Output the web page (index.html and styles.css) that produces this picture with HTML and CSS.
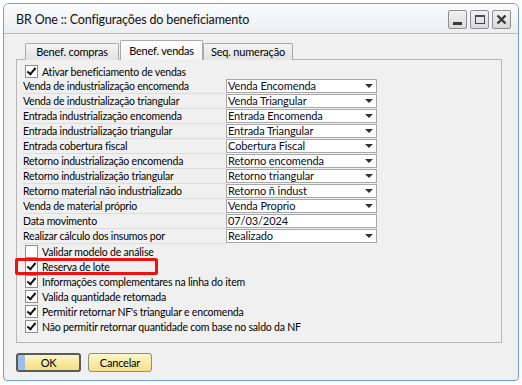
FILE: index.html
```html
<!DOCTYPE html>
<html>
<head>
<meta charset="utf-8">
<link rel="stylesheet" href="styles.css">
</head>
<body>
<div class="window">
  <div class="titlebar">
    <span class="title">BR One :: Configurações do beneficiamento</span>
    <div class="wbtns">
      <div class="wbtn"><svg width="17" height="17" viewBox="0 0 17 17"><rect x="4" y="11" width="9" height="3" fill="#3a3a3a"/></svg></div>
      <div class="wbtn"><svg width="17" height="17" viewBox="0 0 17 17"><rect x="4.5" y="4.5" width="9" height="8" fill="none" stroke="#4a4a4a" stroke-width="1"/><rect x="4" y="4" width="10" height="2" fill="#4a4a4a"/></svg></div>
      <div class="wbtn"><svg width="17" height="17" viewBox="0 0 17 17"><path d="M4.5 4.5 L12.5 12.5 M12.5 4.5 L4.5 12.5" stroke="#3a3a3a" stroke-width="2.4"/></svg></div>
    </div>
  </div>
  <div class="content">
    <div class="tabs">
      <div class="tab t1">Benef. compras</div>
      <div class="tab active">Benef. vendas</div>
      <div class="tab t3">Seq. numeração</div>
    </div>
    <div class="panel">
      <div class="chkrow first"><span class="chk on"></span><span>Ativar beneficiamento de vendas</span></div>
      <div class="row"><span class="lbl">Venda de industrialização encomenda</span><span class="sel">Venda Encomenda</span></div>
      <div class="row"><span class="lbl">Venda de industrialização triangular</span><span class="sel">Venda Triangular</span></div>
      <div class="row"><span class="lbl">Entrada industrialização encomenda</span><span class="sel">Entrada Encomenda</span></div>
      <div class="row"><span class="lbl">Entrada industrialização triangular</span><span class="sel">Entrada Triangular</span></div>
      <div class="row"><span class="lbl">Entrada cobertura fiscal</span><span class="sel">Cobertura Fiscal</span></div>
      <div class="row"><span class="lbl">Retorno industrialização encomenda</span><span class="sel">Retorno encomenda</span></div>
      <div class="row"><span class="lbl">Retorno industrialização triangular</span><span class="sel">Retorno triangular</span></div>
      <div class="row"><span class="lbl">Retorno material não industrializado</span><span class="sel">Retorno ñ indust</span></div>
      <div class="row"><span class="lbl">Venda de material próprio</span><span class="sel">Venda Proprio</span></div>
      <div class="row"><span class="lbl">Data movimento</span><span class="sel txt">07/03/2024</span></div>
      <div class="row"><span class="lbl">Realizar cálculo dos insumos por</span><span class="sel">Realizado</span></div>
      <div class="chkrow"><span class="chk"></span><span>Validar modelo de análise</span></div>
      <div class="chkrow hl"><span class="chk on"></span><span>Reserva de lote</span><span class="redbox"></span></div>
      <div class="chkrow"><span class="chk on"></span><span>Informações complementares na linha do item</span></div>
      <div class="chkrow"><span class="chk on"></span><span>Valida quantidade retornada</span></div>
      <div class="chkrow"><span class="chk on"></span><span>Permitir retornar NF's triangular e encomenda</span></div>
      <div class="chkrow"><span class="chk on"></span><span>Não permitir retornar quantidade com base no saldo da NF</span></div>
    </div>
    <div class="buttons">
      <div class="btn default">OK</div>
      <div class="btn">Cancelar</div>
    </div>
  </div>
</div>
</body>
</html>
```
FILE: styles.css
```css
html, body {
  margin: 0;
  padding: 0;
  background: #ffffff;
}
body {
  font-family: Lato, "Liberation Sans", Arial, sans-serif;
  font-size: 10.5px;
  letter-spacing: -0.2px;
  color: #000;
}
.window {
  margin: 3px 0 0 3px;
  width: 514px;
  height: 376px;
  border: 1px solid #6f9fdb;
  border-radius: 6px 6px 4px 4px;
  background: #f0f0f0;
  overflow: hidden;
  display: flex;
  flex-direction: column;
}
.titlebar {
  height: 29px;
  border-bottom: 1px solid #b9bcc0;
  background: linear-gradient(#fbfbfc, #eceef1);
  display: flex;
  align-items: center;
  padding-left: 12px;
  padding-right: 7px;
}
.title {
  font-size: 12.5px;
  letter-spacing: -0.15px;
  color: #111;
  flex: 1;
  padding-top: 1px;
}
.wbtns {
  display: flex;
  gap: 3px;
  margin-top: 1px;
}
.wbtn {
  width: 17px;
  height: 17px;
  border: 1px solid #8e8e8e;
  border-radius: 2px;
  background: linear-gradient(#f2f2f2, #d9d9d9);
}
.wbtn svg { display: block; }
.content {
  padding: 7px 16px 0 12px;
  flex: 1;
}
.tabs {
  display: flex;
  align-items: flex-end;
  padding-left: 9px;
  height: 19px;
  position: relative;
  z-index: 1;
  margin-bottom: -1px;
}
.tab {
  border: 1px solid #a9a9a9;
  border-bottom: none;
  background: linear-gradient(#f4f4f4, #e3e3e3);
  text-align: center;
  box-sizing: border-box;
  height: 17px;
  line-height: 16px;
  border-radius: 2px 2px 0 0;
  font-size: 11px;
}
.t1 { width: 94px; margin-right: 1px; }
.t3 { width: 90px; }
.tab.active {
  width: 83px;
  height: 20px;
  line-height: 19px;
  background: linear-gradient(#fdfdfd, #f3f3f3);
}
.panel {
  border: 1px solid #b5b5b5;
  height: 278px;
  padding: 4px 0 0 5px;
  background: #f0f0f0;
}
.row {
  display: flex;
  height: 15px;
}
.lbl {
  width: 203px;
  height: 14px;
  line-height: 14px;
  padding-left: 1px;
  border-bottom: 1px solid #dcdcdc;
  white-space: nowrap;
}
.sel {
  width: 148px;
  height: 12px;
  line-height: 12px;
  border: 1px solid #a8a8a8;
  background: #fff;
  padding-left: 1px;
  position: relative;
  color: #0a0a1e;
  font-size: 11px;
  letter-spacing: -0.1px;
  white-space: nowrap;
}
.sel::after {
  content: "";
  position: absolute;
  right: 3px;
  top: 4px;
  border-left: 4px solid transparent;
  border-right: 4px solid transparent;
  border-top: 4px solid #333;
}
.sel.txt::after { display: none; }
.chkrow {
  display: flex;
  align-items: center;
  height: 15px;
  padding-left: 3px;
  position: relative;
  white-space: nowrap;
}
.chk {
  width: 11px;
  height: 11px;
  border: 1px solid #8e8f8f;
  background: #fff;
  margin-right: 4px;
  position: relative;
}
.chk.on::after {
  content: "";
  position: absolute;
  left: 3px;
  top: 0px;
  width: 3px;
  height: 7px;
  border-right: 2px solid #111;
  border-bottom: 2px solid #111;
  transform: rotate(40deg);
}
.redbox {
  position: absolute;
  left: -7px;
  top: -1px;
  width: 137px;
  height: 11px;
  border: 3px solid #ee1111;
  border-radius: 2px;
}
.buttons {
  display: flex;
  gap: 7px;
  margin-top: 10px;
}
.btn {
  height: 17px;
  line-height: 17px;
  text-align: center;
  border: 1px solid #8b8b8b;
  border-radius: 3px;
  background: linear-gradient(#fdf6c8, #f5e08a);
  width: 62px;
  font-size: 11px;
}
.btn.default {
  width: 61px;
  border: 2px solid #5a5a5a;
  height: 15px;
  line-height: 15px;
  background: linear-gradient(to right, #9dbde6 0, #9dbde6 7px, transparent 7px), linear-gradient(#fdf6c8, #f3dd80);
}
```
